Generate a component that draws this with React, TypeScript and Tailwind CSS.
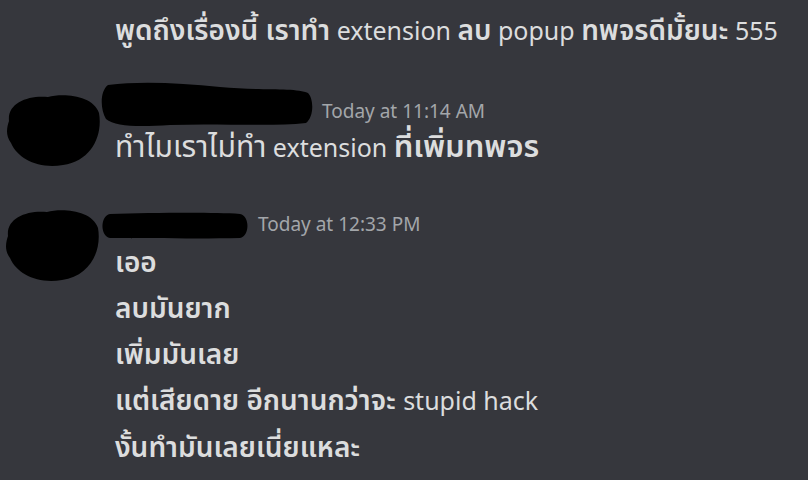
import React from "react";

const Avatar = ({ h }: { h: number }) => (
  <svg width="100" height={h} viewBox={`0 0 100 ${h}`} className="block">
    <path
      d="M6 30 C 4 12, 25 4, 45 6 C 60 2, 90 4, 96 22 C 100 45, 88 70, 60 74 C 35 78, 15 68, 8 52 C 2 44, 4 36, 6 30 Z"
      fill="#000"
    />
  </svg>
);

const NameBlob1 = () => (
  <svg width="214" height="48" viewBox="0 0 214 48" className="block">
    <path
      d="M8 4 C 40 0, 80 2, 120 6 C 160 10, 195 6, 208 12 C 214 18, 214 36, 206 42 C 170 46, 120 42, 70 44 C 40 46, 15 46, 6 38 C 0 28, 0 10, 8 4 Z"
      fill="#000"
    />
  </svg>
);

const NameBlob2 = () => (
  <svg width="150" height="28" viewBox="0 0 150 28" className="block">
    <path
      d="M10 2 C 50 1, 110 0, 140 2 C 150 4, 150 24, 140 26 C 100 27, 50 26, 10 26 C 0 24, 0 4, 10 2 Z"
      fill="#000"
    />
  </svg>
);

const font = { fontFamily: '"Noto Sans", "Noto Sans Thai", "Leelawadee UI", sans-serif' };

export default function App() {
  return (
    <div
      className="w-[808px] h-[480px] overflow-hidden bg-[#36373d] text-[#dcddde]"
      style={font}
    >
      <div className="pl-[115px] pt-[9px] text-[25px] leading-[40px] whitespace-nowrap">
        <span className="font-semibold text-[28px]">พูดถึงเรื่องนี้ เราทำ</span> extension{" "}
        <span className="font-semibold text-[28px]">ลบ</span> popup{" "}
        <span className="font-semibold text-[28px]">ทพจรดีมั้ยนะ</span> 555
      </div>

      <div className="flex mt-[31px]">
        <div className="w-[115px] shrink-0 pl-[3px] pt-[10px]">
          <Avatar h={76} />
        </div>
        <div className="flex flex-col">
          <div className="flex items-end -ml-[15px] gap-[8px]">
            <NameBlob1 />
            <span className="text-[19px] leading-[28px] text-[#a3a6aa] mb-[4px]">
              Today at 11:14 AM
            </span>
          </div>
          <div className="text-[25px] leading-[40px] whitespace-nowrap -mt-[4px]">
            <span className="text-[30px]">ทำไมเราไม่ทำ</span> extension{" "}
            <span className="font-semibold text-[31px]">ที่เพิ่มทพจร</span>
          </div>
        </div>
      </div>

      <div className="flex mt-[43px]">
        <div className="w-[115px] shrink-0 pl-[2px] -mt-[4px]">
          <Avatar h={76} />
        </div>
        <div className="flex flex-col">
          <div className="flex items-center -ml-[15px] gap-[8px] h-[32px]">
            <NameBlob2 />
            <span className="text-[19px] leading-[28px] text-[#a3a6aa] -mt-[4px]">Today at 12:33 PM</span>
          </div>
          <div className="text-[28px] leading-[46px] font-semibold whitespace-nowrap -mt-[4px]">
            <div>เออ</div>
            <div>ลบมันยาก</div>
            <div>เพิ่มมันเลย</div>
            <div>
              แต่เสียดาย อีกนานกว่าจะ <span className="font-normal text-[25px]">stupid hack</span>
            </div>
            <div>งั้นทำมันเลยเนี่ยแหละ</div>
          </div>
        </div>
      </div>
    </div>
  );
}
